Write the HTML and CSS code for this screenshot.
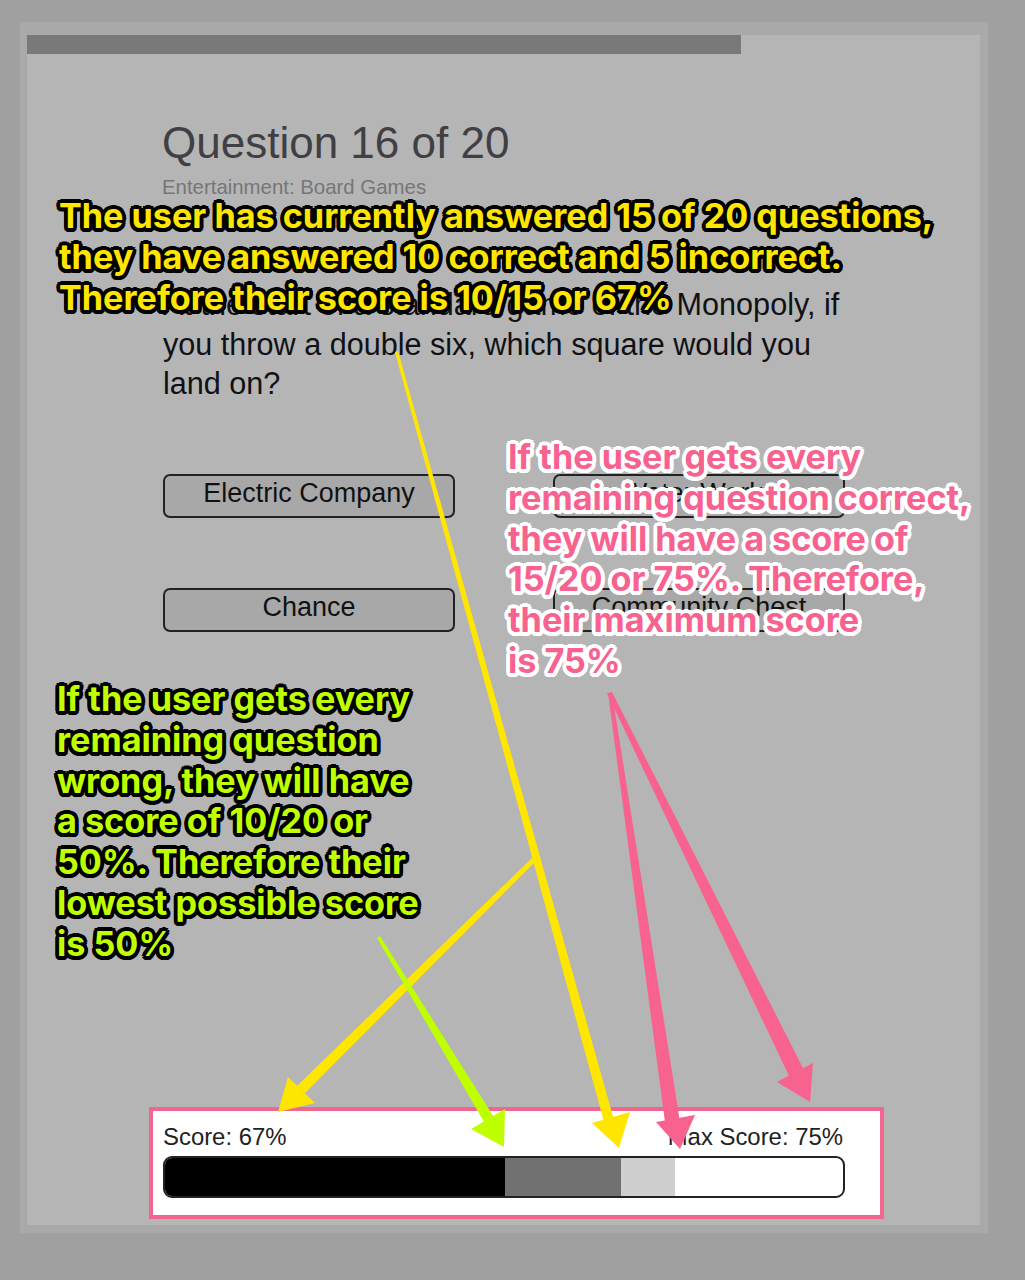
FILE: index.html
```html
<!DOCTYPE html>
<html>

<head>
    <title>Quiz score explained</title>
    <link rel="stylesheet" href="styles.css">
</head>

<body>
    <div class="frame">
        <div class="card">
            <div class="progress"><div class="progress-fill"></div></div>

            <div class="quiz">
                <h1>Question 16 of 20</h1>
                <p class="category">Entertainment: Board Games</p>
                <p class="question">At the start of a standard game of the Monopoly, if<br>you throw a double six, which square would you<br>land on?</p>

                <div class="answers">
                    <button class="answer">Electric Company</button>
                    <button class="answer">Water Works</button>
                    <button class="answer">Chance</button>
                    <button class="answer">Community Chest</button>
                </div>

                <div class="score-panel">
                    <div class="score-labels">
                        <span>Score: 67%</span>
                        <span>Max Score: 75%</span>
                    </div>
                    <div class="score-bar">
                        <div class="seg seg-low"></div>
                        <div class="seg seg-now"></div>
                        <div class="seg seg-max"></div>
                    </div>
                </div>
            </div>
        </div>
    </div>

    <!-- annotations drawn over the screenshot -->
    <svg class="arrows" width="1025" height="1280" viewBox="0 0 1025 1280">
        <polygon class="yellow" points="395,352 398,351 614,1120 604,1122"/>
        <polygon class="yellow" points="592,1123 630,1112 619,1148"/>
        <polygon class="yellow" points="532,858 535,862 305,1093 297,1086"/>
        <polygon class="yellow" points="278,1112 288,1077 315,1103"/>
        <polygon class="green" points="377,938 380,936 497,1122 487,1127"/>
        <polygon class="green" points="471,1129 505,1109 504,1147"/>
        <polygon class="pink" points="608,693 612,693 680,1122 665,1122"/>
        <polygon class="pink" points="656,1122 695,1115 680,1149"/>
        <polygon class="pink" points="607,693 612,692 804,1070 790,1078"/>
        <polygon class="pink" points="777,1082 813,1063 810,1102"/>
    </svg>

    <p class="note note-yellow">The user has currently answered 15 of 20 questions,<br>they have answered 10 correct and 5 incorrect.<br>Therefore their score is 10/15 or 67%</p>
    <p class="note note-pink">If the user gets every<br>remaining question correct,<br>they will have a score of<br>15/20 or 75%. Therefore,<br>their maximum score<br>is 75%</p>
    <p class="note note-green">If the user gets every<br>remaining question<br>wrong, they will have<br>a score of 10/20 or<br>50%. Therefore their<br>lowest possible score<br>is 50%</p>
</body>

</html>
```

FILE: styles.css
```css
/* page frame */
body {
  margin: 0;
  height: 1280px;
  box-sizing: border-box;
  padding: 22px 37px 47px 20px;
  background-color: #a0a0a0;
  font-family: "Liberation Sans", Arial, sans-serif;
  overflow: hidden;
}

.frame {
  height: 100%;
  box-sizing: border-box;
  padding: 13px 8px 8px 7px;
  background-color: #a9a9a9;
}

.card {
  height: 100%;
  background-color: #b5b5b5;
  display: flex;
  flex-direction: column;
}

.progress {
  height: 19px;
  flex-shrink: 0;
}

.progress-fill {
  width: 714px;
  height: 100%;
  background-color: #797979;
}

/* quiz column */
.quiz {
  flex: 1;
  width: 682px;
  margin-left: 136px;
  display: flex;
  flex-direction: column;
}

h1 {
  margin: 64px 0 0 -1px;
  font-size: 44px;
  line-height: 50px;
  font-weight: normal;
  color: #3f3f44;
}

.category {
  margin: 7px 0 0 -1px;
  font-size: 20.4px;
  line-height: 24px;
  color: #76767a;
}

.question {
  margin: 86px 0 0;
  font-size: 30.6px;
  line-height: 39.5px;
  color: #111114;
}

.answers {
  margin-top: 70px;
  display: grid;
  grid-template-columns: 292px 292px;
  grid-auto-rows: 44px;
  column-gap: 98px;
  row-gap: 70px;
}

.answer {
  border: 2px solid #222;
  border-radius: 7px;
  background-color: #a8a8a8;
  font-family: inherit;
  font-size: 27px;
  color: #111;
  padding: 0 0 4px;
}

/* score panel */
.score-panel {
  margin: auto -39px 6px -14px;
  height: 112px;
  box-sizing: border-box;
  border: 4px solid #f0668f;
  background-color: #fff;
  padding: 11px 37px 0 10px;
}

.score-labels {
  display: flex;
  justify-content: space-between;
  font-size: 23.9px;
  line-height: 30px;
  color: #222;
}

.score-bar {
  margin: 4px -2px 0 0;
  height: 42px;
  box-sizing: border-box;
  border: 2px solid #222;
  border-radius: 9px;
  overflow: hidden;
  display: flex;
}

.seg {
  height: 100%;
}

.seg-low {
  width: 340px;
  background-color: #000;
}

.seg-now {
  width: 116px;
  background-color: #717171;
}

.seg-max {
  width: 54px;
  background-color: #cfcfcf;
}

/* annotations */
.arrows {
  position: absolute;
  left: 0;
  top: 0;
}

.yellow {
  fill: #ffe600;
}

.green {
  fill: #bfff00;
}

.pink {
  fill: #f8628f;
}

.note {
  position: absolute;
  margin: 0;
  font-family: Inter, "Liberation Sans", sans-serif;
  font-weight: 700;
  font-size: 34.2px;
  line-height: 40.8px;
  white-space: nowrap;
  --edge: #000;
  text-shadow:
    3.8px 0 0 var(--edge), -3.8px 0 0 var(--edge), 0 3.8px 0 var(--edge), 0 -3.8px 0 var(--edge),
    2.7px 2.7px 0 var(--edge), -2.7px 2.7px 0 var(--edge), 2.7px -2.7px 0 var(--edge), -2.7px -2.7px 0 var(--edge),
    3.5px 1.5px 0 var(--edge), -3.5px 1.5px 0 var(--edge), 3.5px -1.5px 0 var(--edge), -3.5px -1.5px 0 var(--edge),
    1.5px 3.5px 0 var(--edge), -1.5px 3.5px 0 var(--edge), 1.5px -3.5px 0 var(--edge), -1.5px -3.5px 0 var(--edge);
}

.note-yellow {
  left: 59px;
  top: 196px;
  color: #ffe600;
}

.note-green {
  left: 57px;
  top: 679px;
  color: #bfff00;
}

.note-pink {
  left: 508px;
  top: 437px;
  color: #f8628f;
  --edge: #fff;
}
```
